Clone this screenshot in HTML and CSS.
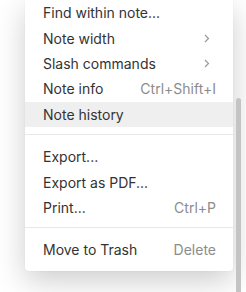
FILE: index.html
```html
<!DOCTYPE html>
<html>
<head>
<meta charset="utf-8">
<link rel="stylesheet" href="styles.css">
</head>
<body>
<div class="page">
  <div class="menu">
    <div class="item"><span class="label">Find within note...</span></div>
    <div class="item"><span class="label">Note width</span><svg class="chev" width="6" height="9" viewBox="0 0 6 9"><polyline points="1,1 4.5,4.5 1,8" fill="none" stroke="#9a9a9a" stroke-width="1.2"/></svg></div>
    <div class="item"><span class="label">Slash commands</span><svg class="chev" width="6" height="9" viewBox="0 0 6 9"><polyline points="1,1 4.5,4.5 1,8" fill="none" stroke="#9a9a9a" stroke-width="1.2"/></svg></div>
    <div class="item"><span class="label">Note info</span><span class="key">Ctrl+Shift+I</span></div>
    <div class="item active"><span class="label">Note history</span></div>
    <div class="sep"></div>
    <div class="item"><span class="label">Export...</span></div>
    <div class="item"><span class="label">Export as PDF...</span></div>
    <div class="item"><span class="label">Print...</span><span class="key">Ctrl+P</span></div>
    <div class="sep"></div>
    <div class="item"><span class="label">Move to Trash</span><span class="key">Delete</span></div>
  </div>
  <div class="scroll"><div class="thumb"></div></div>
</div>
</body>
</html>
```

FILE: styles.css
```css
html, body {
  margin: 0;
  padding: 0;
  background: #ffffff;
}
body {
  width: 246px;
  height: 292px;
  overflow: hidden;
  font-family: Inter, "Noto Sans", sans-serif;
}
.page {
  display: flex;
  align-items: flex-start;
  height: 292px;
  padding-left: 25px;
  box-sizing: border-box;
}
.menu {
  width: 208px;
  background: #ffffff;
  box-shadow: 0 10px 30px rgba(0, 0, 0, 0.2), 0 0 2px rgba(0, 0, 0, 0.06);
  border-radius: 0 0 4px 4px;
  padding-bottom: 8px;
  flex: none;
}
.item {
  display: flex;
  align-items: center;
  justify-content: space-between;
  height: 25.4px;
  padding: 0 17px 0 18px;
  font-size: 14px;
  color: #333333;
}
.item.active {
  background: #efefef;
}
.key {
  color: #8c8c8c;
  font-size: 14px;
}
.chev {
  margin-right: 6px;
}
.sep {
  height: 1px;
  background: #e8e8e8;
  margin: 7px 0 9px;
}
.scroll {
  width: 5px;
  height: 292px;
  margin-left: 3px;
  display: flex;
  flex-direction: column;
  flex: none;
}
.thumb {
  margin-top: 98px;
  flex: 1;
  background: #c4c4c4;
  border-radius: 3px 3px 0 0;
}
```
